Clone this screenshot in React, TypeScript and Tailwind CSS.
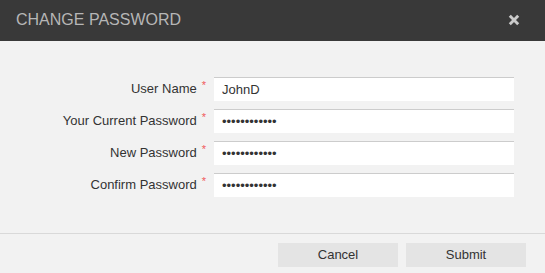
import React from 'react';

const fields = [
  { label: 'User Name', value: 'JohnD' },
  { label: 'Your Current Password', value: '••••••••••••' },
  { label: 'New Password', value: '••••••••••••' },
  { label: 'Confirm Password', value: '••••••••••••' },
];

export default function App() {
  return (
    <div
      className="w-[545px] h-[273px] bg-[#f2f2f2] flex flex-col overflow-hidden"
      style={{ fontFamily: '"Liberation Sans", Arial, sans-serif' }}
    >
      <div className="h-[41px] bg-[#393939] flex items-center justify-between pl-4 pr-[25px] pb-[2px]">
        <span className="text-[16px] text-[#b6b6b6]">CHANGE PASSWORD</span>
        <svg width="12" height="12" viewBox="0 0 10 10" className="mt-[1px]">
          <path d="M1.5 1.5 L8.5 8.5 M8.5 1.5 L1.5 8.5" stroke="#cacaca" strokeWidth="2.4" strokeLinecap="butt" />
        </svg>
      </div>

      <div className="flex flex-col gap-2 pt-9 pb-9 border-b border-[#d9d9d9]">
        {fields.map((f) => (
          <div key={f.label} className="flex items-center h-6">
            <label className="w-[208px] text-right text-[13px] text-[#333] pr-[2px]">
              {f.label}
              <span className="ml-[5px] text-[11px] text-[#f05a5a] relative -top-[4px]">*</span>
            </label>
            <input
              readOnly
              defaultValue={f.value}
              className="ml-[6px] w-[300px] h-6 bg-white border-t border-[#cccccc] px-2 text-[13px] text-[#333] outline-none"
              style={{ fontFamily: '"Liberation Sans", Arial, sans-serif' }}
            />
          </div>
        ))}
      </div>

      <div className="flex justify-end gap-2 pt-[9px] pr-[19px]">
        <button className="w-[120px] h-6 bg-[#e4e4e4] text-[13px] text-[#333]">Cancel</button>
        <button className="w-[120px] h-6 bg-[#e4e4e4] text-[13px] text-[#333]">Submit</button>
      </div>
    </div>
  );
}
